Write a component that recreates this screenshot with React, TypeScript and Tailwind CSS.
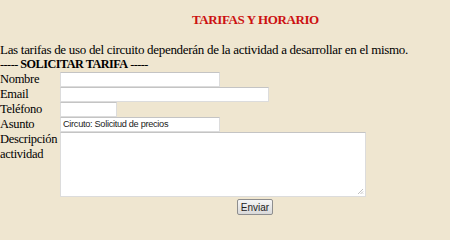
import React from "react";

const serif = { fontFamily: '"Liberation Serif", "Times New Roman", serif' };
const sans = { fontFamily: '"Liberation Sans", Tahoma, Arial, sans-serif' };

function Field({ w, value }: { w: string; value?: string }) {
  return (
    <div
      className={`${w} h-[15px] bg-white border border-[#dcdcdc] border-t-[#c4c4c4] flex items-center pl-[2px] text-[9.2px] text-[#222] leading-none`}
      style={sans}
    >
      {value}
    </div>
  );
}

export default function App() {
  return (
    <div className="w-[450px] h-[240px] bg-[#efe6d0] text-black overflow-hidden" style={serif}>
      <div className="h-[42px] pl-[192px] pt-[12px]">
        <div className="text-[13px] font-bold text-[#cc1111] leading-[15px] tracking-[-0.4px]">TARIFAS Y HORARIO</div>
      </div>
      <div className="text-[13px] leading-[15px] whitespace-nowrap tracking-[-0.3px]">
        Las tarifas de uso del circuito dependerán de la actividad a desarrollar en el mismo.
      </div>
      <div className="text-[12.2px] leading-[15px] tracking-[-0.5px]">
        ----- <b>SOLICITAR TARIFA</b> -----
      </div>
      <div className="text-[12.5px] leading-[15px] tracking-[-0.3px]">
        <div className="flex h-[15px]">
          <div className="w-[60px]">Nombre</div>
          <Field w="w-[160px]" />
        </div>
        <div className="flex h-[15px]">
          <div className="w-[60px]">Email</div>
          <Field w="w-[209px]" />
        </div>
        <div className="flex h-[15px]">
          <div className="w-[60px]">Teléfono</div>
          <Field w="w-[57px]" />
        </div>
        <div className="flex h-[15px]">
          <div className="w-[60px]">Asunto</div>
          <Field w="w-[160px]" value="Circuto: Solicitud de precios" />
        </div>
        <div className="flex">
          <div className="w-[60px] whitespace-nowrap">
            Descripción
            <br />
            actividad
          </div>
          <div className="relative w-[306px] h-[65px] bg-white border border-[#dcdcdc] border-t-[#c4c4c4]">
            <svg className="absolute right-[1px] bottom-[1px]" width="7" height="7" viewBox="0 0 7 7">
              <path d="M6 1 L1 6 M6 3.5 L3.5 6 M6 5.5 L5.5 6" stroke="#b0b0b0" strokeWidth="0.8" />
            </svg>
          </div>
        </div>
        <div className="flex pl-[237px] pt-[2px] tracking-normal">
          <div
            className="w-[36px] h-[16px] rounded-[2px] border border-[#8e8e8e] bg-gradient-to-b from-[#f6f6f6] to-[#d9d9d9] flex items-center justify-center text-[10px] text-[#222]"
            style={sans}
          >
            Enviar
          </div>
        </div>
      </div>
    </div>
  );
}
